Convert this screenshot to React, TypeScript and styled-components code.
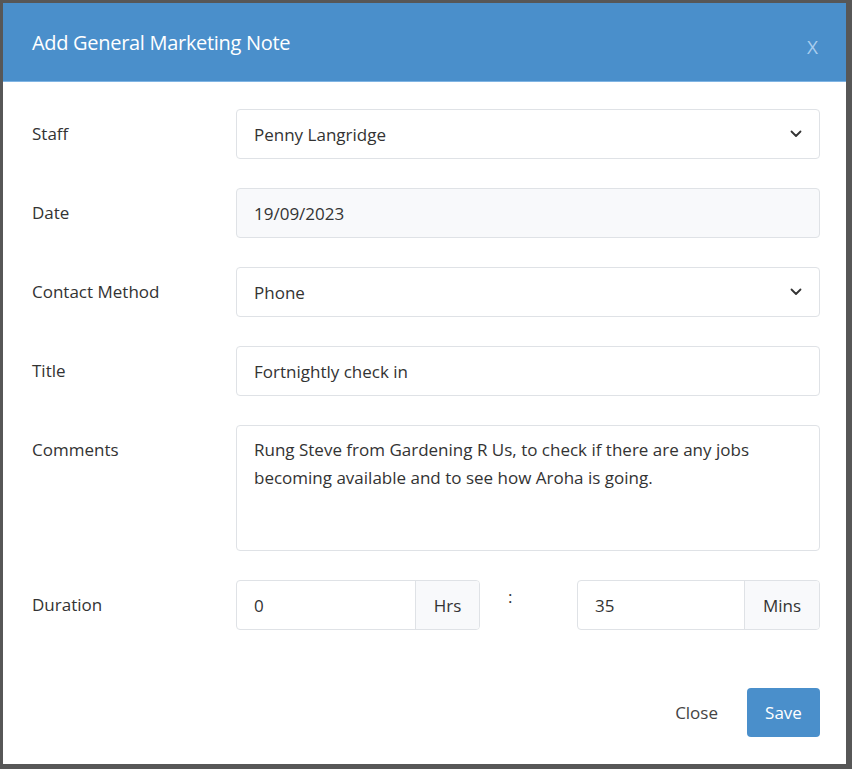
import React from 'react';
import styled, { createGlobalStyle } from 'styled-components';

const GlobalStyle = createGlobalStyle`
  html, body {
    margin: 0;
    padding: 0;
    background: #5a5a5a;
  }
  body {
    font-family: 'Open Sans', 'Noto Sans', Arial, sans-serif;
  }
`;

const Backdrop = styled.div`
  width: 852px;
  height: 769px;
  box-sizing: border-box;
  padding: 3px 6px 5px 3px;
  background: #575757;
`;

const Modal = styled.div`
  width: 843px;
  height: 761px;
  background: #fff;
  display: flex;
  flex-direction: column;
`;

const Header = styled.div`
  height: 78px;
  background: #4a8fcb;
  border-bottom: 1px solid #7fb4e3;
  display: flex;
  align-items: center;
  justify-content: space-between;
  padding: 0 26px 0 29px;
  box-sizing: content-box;
`;

const Title = styled.h4`
  margin: 0;
  color: #fff;
  font-size: 20px;
  font-weight: 400;
  letter-spacing: -0.3px;
`;

const CloseX = styled.button`
  border: none;
  background: none;
  color: #a9cdee;
  font-family: 'Open Sans', Arial, sans-serif;
  font-size: 19px;
  padding: 0 2px;
  margin-top: 10px;
  cursor: pointer;
`;

const Body = styled.div`
  flex: 1;
  padding: 27px 26px 0 29px;
  display: flex;
  flex-direction: column;
  gap: 29px;
`;

const Row = styled.div`
  display: grid;
  grid-template-columns: 204px 584px;
  align-items: start;
`;

const Label = styled.label`
  color: #333;
  font-size: 17px;
  line-height: 50px;
  height: 50px;
`;

const Field = styled.div<{ $muted?: boolean }>`
  height: 50px;
  box-sizing: border-box;
  border: 1px solid #dfe2e6;
  border-radius: 4px;
  background: ${(p) => (p.$muted ? '#f8f9fb' : '#fff')};
  display: flex;
  align-items: center;
  justify-content: space-between;
  padding: 0 17px;
  color: #333;
  font-size: 17px;
`;

const TextArea = styled.div`
  height: 126px;
  box-sizing: border-box;
  border: 1px solid #dfe2e6;
  border-radius: 4px;
  padding: 10px 17px;
  color: #333;
  font-size: 17px;
  line-height: 28px;
`;

const Chevron = () => (
  <svg width="12" height="8" viewBox="0 0 12 8" fill="none">
    <path d="M1.5 1.5L6 6l4.5-4.5" stroke="#333" strokeWidth="1.8" strokeLinecap="round" strokeLinejoin="round" />
  </svg>
);

const DurationRow = styled.div`
  display: flex;
  align-items: flex-start;
`;

const InputGroup = styled.div<{ $width: number }>`
  width: ${(p) => p.$width}px;
  height: 50px;
  box-sizing: border-box;
  border: 1px solid #dfe2e6;
  border-radius: 4px;
  display: flex;
  overflow: hidden;
`;

const GroupInput = styled.div`
  flex: 1;
  display: flex;
  align-items: center;
  padding: 0 17px;
  color: #333;
  font-size: 17px;
`;

const Addon = styled.div<{ $width: number }>`
  width: ${(p) => p.$width}px;
  background: #f8f9fb;
  border-left: 1px solid #dfe2e6;
  display: flex;
  align-items: center;
  justify-content: center;
  color: #333;
  font-size: 17px;
`;

const Colon = styled.span`
  width: 97px;
  box-sizing: border-box;
  padding-left: 28px;
  line-height: 34px;
  color: #333;
  font-size: 17px;
`;

const Footer = styled.div`
  display: flex;
  justify-content: flex-end;
  align-items: center;
  gap: 29px;
  padding: 0 26px 27px 0;
`;

const TextButton = styled.button`
  border: none;
  background: none;
  color: #444;
  font-family: inherit;
  font-size: 17px;
  padding: 0;
  cursor: pointer;
`;

const PrimaryButton = styled.button`
  width: 73px;
  height: 49px;
  border: none;
  border-radius: 4px;
  background: #4a8fcb;
  color: #fff;
  font-family: inherit;
  font-size: 17px;
  cursor: pointer;
`;

export default function App() {
  return (
    <>
      <GlobalStyle />
      <Backdrop>
        <Modal>
          <Header>
            <Title>Add General Marketing Note</Title>
            <CloseX>X</CloseX>
          </Header>
          <Body>
            <Row>
              <Label>Staff</Label>
              <Field>
                Penny Langridge
                <Chevron />
              </Field>
            </Row>
            <Row>
              <Label>Date</Label>
              <Field $muted>19/09/2023</Field>
            </Row>
            <Row>
              <Label>Contact Method</Label>
              <Field>
                Phone
                <Chevron />
              </Field>
            </Row>
            <Row>
              <Label>Title</Label>
              <Field>Fortnightly check in</Field>
            </Row>
            <Row>
              <Label>Comments</Label>
              <TextArea>
                Rung Steve from Gardening R Us, to check if there are any jobs becoming available and to see how Aroha is going.
              </TextArea>
            </Row>
            <Row>
              <Label>Duration</Label>
              <DurationRow>
                <InputGroup $width={244}>
                  <GroupInput>0</GroupInput>
                  <Addon $width={63}>Hrs</Addon>
                </InputGroup>
                <Colon>:</Colon>
                <InputGroup $width={243}>
                  <GroupInput>35</GroupInput>
                  <Addon $width={74}>Mins</Addon>
                </InputGroup>
              </DurationRow>
            </Row>
          </Body>
          <Footer>
            <TextButton>Close</TextButton>
            <PrimaryButton>Save</PrimaryButton>
          </Footer>
        </Modal>
      </Backdrop>
    </>
  );
}
